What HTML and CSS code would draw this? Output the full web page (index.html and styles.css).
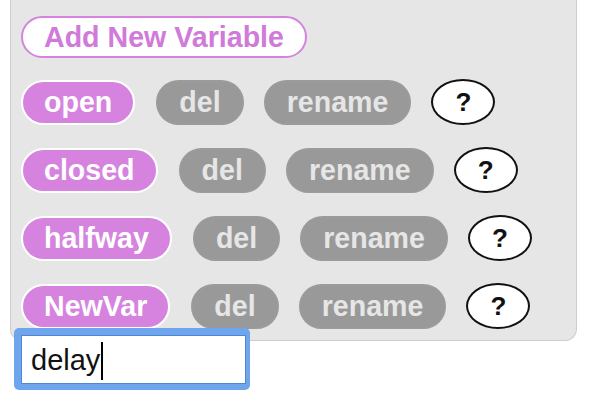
FILE: index.html
```html
<!DOCTYPE html>
<html>
<head>
<meta charset="utf-8">
<link rel="stylesheet" href="styles.css">
</head>
<body>
<div class="wrap">
  <div class="panel">
    <div class="row first">
      <span class="pill add">Add New Variable</span>
    </div>
    <div class="row">
      <span class="pill var">open</span>
      <span class="pill gray">del</span>
      <span class="pill gray">rename</span>
      <span class="help">?</span>
    </div>
    <div class="row">
      <span class="pill var">closed</span>
      <span class="pill gray">del</span>
      <span class="pill gray">rename</span>
      <span class="help">?</span>
    </div>
    <div class="row">
      <span class="pill var">halfway</span>
      <span class="pill gray">del</span>
      <span class="pill gray">rename</span>
      <span class="help">?</span>
    </div>
    <div class="row">
      <span class="pill var">NewVar</span>
      <span class="pill gray">del</span>
      <span class="pill gray">rename</span>
      <span class="help">?</span>
    </div>
  </div>
  <div class="editor">
    <div class="field"><span class="value">delay</span><span class="caret"></span></div>
  </div>
</div>
</body>
</html>
```
FILE: styles.css
```css
html, body {
  margin: 0;
  padding: 0;
  background: #ffffff;
}
body {
  font-family: "Liberation Sans", Arial, sans-serif;
  width: 600px;
  height: 409px;
  overflow: hidden;
}
.wrap {
  position: relative;
  padding-left: 10px;
}
.panel {
  box-sizing: border-box;
  width: 567px;
  background: #e6e6e6;
  border: 1px solid #cdcdcd;
  border-top: none;
  border-radius: 0 0 12px 12px;
  padding: 16px 10px 12px 10px;
}
.row {
  display: flex;
  align-items: center;
  gap: 20px;
  height: 44px;
  margin-top: 24px;
}
.row.first {
  margin-top: 0;
  height: 42px;
}
.row.first + .row {
  margin-top: 22px;
}
.pill {
  display: inline-flex;
  align-items: center;
  box-sizing: border-box;
  height: 45px;
  padding: 1px 21px 0 21px;
  border: 2px solid transparent;
  border-radius: 23px;
  font-size: 28.6px;
  font-weight: bold;
  line-height: 1;
  white-space: nowrap;
}
.add {
  height: 42px;
  background: #ffffff;
  border-color: #d683df;
  color: #d07ad9;
}
.var {
  background: #d683e0;
  border-color: #ffffff;
  color: #ffffff;
}
.gray {
  background: #999999;
  border-color: #9b9b9b;
  color: #e6e6e6;
}
.var + .gray {
  margin-left: 1px;
}
.help {
  display: inline-flex;
  align-items: center;
  justify-content: center;
  box-sizing: border-box;
  width: 64px;
  height: 46px;
  background: #ffffff;
  border: 2px solid #111111;
  border-radius: 50%;
  font-size: 26px;
  font-weight: bold;
  color: #111111;
  line-height: 1;
}
.editor {
  position: absolute;
  left: 14px;
  top: 328px;
  width: 236px;
  height: 62px;
  box-sizing: border-box;
  background: #6ea5ec;
  border-radius: 5px;
  padding: 7px 4px 6px 7px;
}
.field {
  display: flex;
  align-items: center;
  height: 100%;
  box-sizing: border-box;
  background: #ffffff;
  border: 1px solid #4f86d6;
  padding-left: 9px;
  padding-top: 2px;
  font-size: 29px;
  color: #111111;
}
.caret {
  display: inline-block;
  width: 2px;
  height: 38px;
  background: #000000;
  margin-left: 1px;
}
```
